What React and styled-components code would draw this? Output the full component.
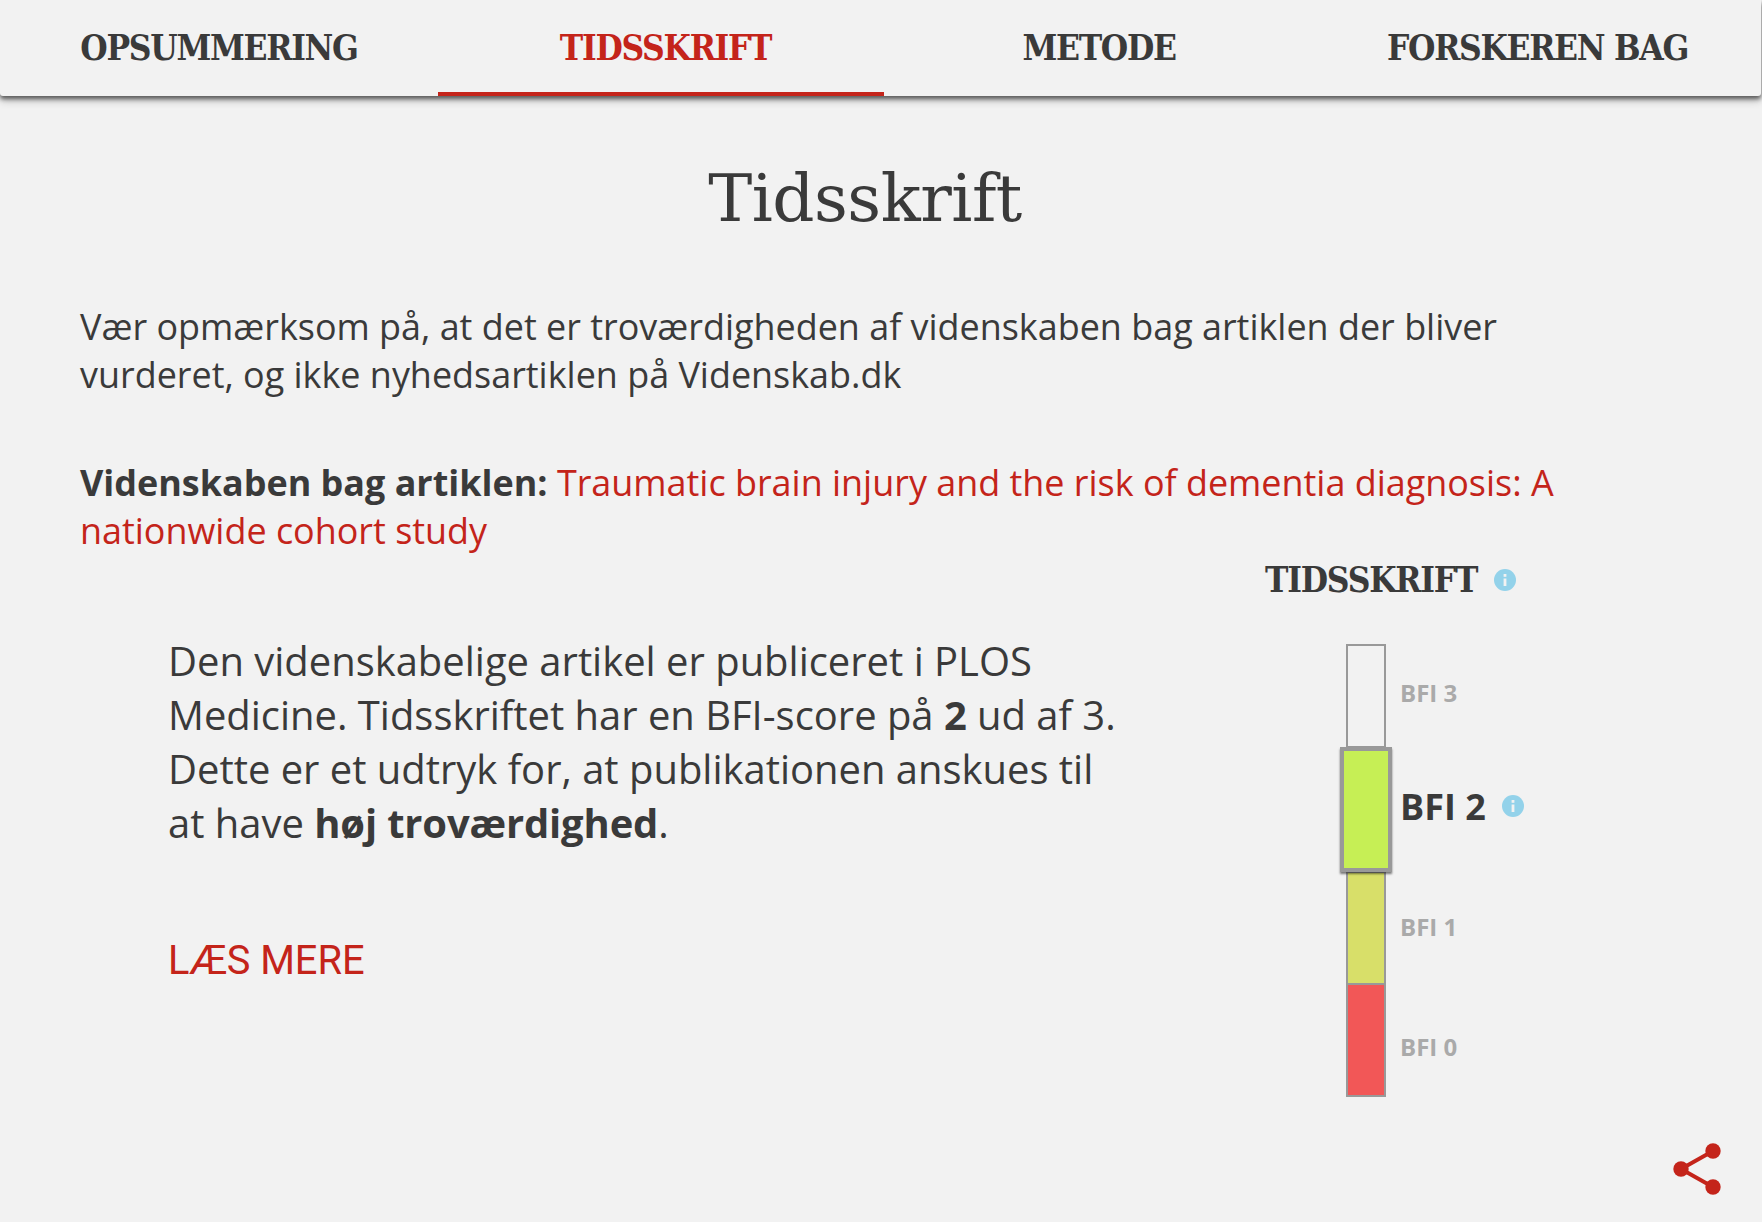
import React from "react";
import styled, { createGlobalStyle } from "styled-components";

const ink = "#3a3a3a";
const red = "#c4241a";
const slab = `"DejaVu Serif Condensed", "DejaVu Serif", serif`;
const sans = `"Open Sans", "Noto Sans", sans-serif`;

const GlobalStyle = createGlobalStyle`
  html, body {
    margin: 0;
    padding: 0;
    background: #fff;
  }
`;

const Page = styled.div`
  position: relative;
  height: 1222px;
  background: #f2f2f2;
  color: ${ink};
  font-family: ${sans};
  overflow: hidden;
`;

const Nav = styled.nav`
  display: grid;
  grid-template-columns: 438px 446px 430px 447px;
  width: 1761px;
  height: 96px;
  background: #f2f2f2;
  border-radius: 0 0 3px 3px;
  box-shadow: 0 3px 4px rgba(0, 0, 0, 0.55), 0 5px 8px rgba(0, 0, 0, 0.2);
`;

const Tab = styled.a`
  display: block;
  box-sizing: border-box;
  height: 96px;
  padding-top: 27px;
  padding-left: ${(p) => (p.$active ? 9 : 0)}px;
  text-align: center;
  font-family: ${slab};
  font-size: 35px;
  line-height: 42px;
  font-weight: 700;
  letter-spacing: -1.3px;
  color: ${(p) => (p.$active ? red : ink)};
  border-bottom: 4px solid ${(p) => (p.$active ? red : "transparent")};
`;

const Content = styled.main`
  width: 1570px;
  padding: 0 0 0 80px;
`;

const Title = styled.h1`
  margin: 61px 0 0;
  text-align: center;
  font-family: "DejaVu Serif", serif;
  font-size: 66px;
  line-height: 84px;
  font-weight: 400;
  letter-spacing: -0.5px;
`;

const Lead = styled.p`
  max-width: 1520px;
  margin: ${(p) => p.$top}px 0 0;
  font-size: 35.93px;
  line-height: 48px;
`;

const Source = styled.a`
  color: ${red};
`;

const Columns = styled.div`
  display: flex;
  justify-content: space-between;
`;

const Summary = styled.section`
  width: 960px;
  padding: 79px 0 0 88px;
`;

const SummaryText = styled.p`
  margin: 0;
  font-size: 39.95px;
  line-height: 54px;

  strong {
    letter-spacing: -0.15px;
  }
`;

const ReadMore = styled.a`
  display: block;
  margin-top: 87px;
  font-family: Roboto, sans-serif;
  font-size: 39.8px;
  line-height: 48px;
  color: ${red};
`;

const Rating = styled.aside`
  width: 385px;
  padding-top: 1px;
`;

const RatingTitle = styled.h2`
  display: flex;
  align-items: center;
  gap: 17px;
  margin: 0 0 40px;
  font-family: ${slab};
  font-size: 35px;
  line-height: 48px;
  font-weight: 700;
  letter-spacing: -1.2px;
`;

const Scale = styled.div`
  display: flex;
  flex-direction: column;
  margin-left: 81px;
`;

const Level = styled.div`
  display: flex;
  align-items: center;
  gap: 14px;
  height: ${(p) => p.$height}px;
`;

const Segment = styled.div`
  box-sizing: border-box;
  flex: none;
  height: 100%;
  width: ${(p) => (p.$active ? 52 : 40)}px;
  margin: 0 ${(p) => (p.$active ? -6 : 0)}px;
  background: ${(p) => p.$color};
  border: ${(p) => (p.$active ? 4 : 2)}px solid #999;
  border-bottom-width: ${(p) => (p.$active ? 4 : p.$last ? 2 : 1)}px;
  border-top-width: ${(p) => (p.$active ? 4 : p.$first ? 2 : 1)}px;
  position: relative;
  z-index: ${(p) => (p.$active ? 1 : 0)};
  box-shadow: ${(p) => (p.$active ? "0 2px 2px rgba(0, 0, 0, 0.5)" : "none")};
`;

const LevelLabel = styled.span`
  display: flex;
  align-items: center;
  gap: 16px;
  margin-top: ${(p) => p.$nudge}px;
  font-size: ${(p) => (p.$active ? 36 : 24)}px;
  font-weight: 700;
  color: ${(p) => (p.$active ? ink : "#aaa")};
`;

const ShareButton = styled.a`
  position: absolute;
  left: 1672px;
  top: 1142px;
  width: 50px;
  height: 54px;
  display: block;
`;

const InfoIcon = () => (
  <svg width="22" height="22" viewBox="0 0 22 22" aria-hidden="true">
    <circle cx="11" cy="11" r="11" fill="#93d2ea" />
    <rect x="9.6" y="9.5" width="2.8" height="7.5" fill="#f2f2f2" />
    <rect x="9.6" y="5" width="2.8" height="2.8" fill="#f2f2f2" />
  </svg>
);

const ShareIcon = () => (
  <svg width="50" height="54" viewBox="0 0 50 54" aria-hidden="true">
    <path d="M41 9 L9 27 L41 45" fill="none" stroke={red} strokeWidth="4" />
    <circle cx="41" cy="9" r="7.7" fill={red} />
    <circle cx="9" cy="27" r="7.7" fill={red} />
    <circle cx="41" cy="45" r="7.7" fill={red} />
  </svg>
);

const tabs = ["OPSUMMERING", "TIDSSKRIFT", "METODE", "FORSKEREN BAG"];

const levels = [
  { name: "BFI 3", color: "#f2f2f2", height: 103, first: true, nudge: -7 },
  { name: "BFI 2", color: "#c6ef55", height: 125, active: true, nudge: -7 },
  { name: "BFI 1", color: "#d8df69", height: 112, nudge: -4 },
  { name: "BFI 0", color: "#f25757", height: 113, last: true, nudge: 12 },
];

export default function App() {
  return (
    <Page>
      <GlobalStyle />
      <Nav>
        {tabs.map((tab) => (
          <Tab key={tab} $active={tab === "TIDSSKRIFT"}>
            {tab}
          </Tab>
        ))}
      </Nav>
      <Content>
        <Title>Tidsskrift</Title>
        <Lead $top={62}>
          Vær opmærksom på, at det er troværdigheden af videnskaben bag artiklen der bliver
          vurderet, og ikke nyhedsartiklen på Videnskab.dk
        </Lead>
        <Lead $top={60}>
          <strong>Videnskaben bag artiklen:</strong>{" "}
          <Source>Traumatic brain injury and the risk of dementia diagnosis: A nationwide cohort study</Source>
        </Lead>
        <Columns>
          <Summary>
            <SummaryText>
              Den videnskabelige artikel er publiceret i PLOS Medicine. Tidsskriftet har en
              BFI-score på <strong>2</strong> ud af 3. Dette er et udtryk for, at publikationen
              anskues til at have <strong>høj troværdighed</strong>.
            </SummaryText>
            <ReadMore>LÆS MERE</ReadMore>
          </Summary>
          <Rating>
            <RatingTitle>
              TIDSSKRIFT
              <InfoIcon />
            </RatingTitle>
            <Scale>
              {levels.map((level) => (
                <Level key={level.name} $height={level.height}>
                  <Segment
                    $color={level.color}
                    $active={level.active}
                    $first={level.first}
                    $last={level.last}
                  />
                  <LevelLabel $active={level.active} $nudge={level.nudge}>
                    {level.name}
                    {level.active && <InfoIcon />}
                  </LevelLabel>
                </Level>
              ))}
            </Scale>
          </Rating>
        </Columns>
      </Content>
      <ShareButton>
        <ShareIcon />
      </ShareButton>
    </Page>
  );
}
